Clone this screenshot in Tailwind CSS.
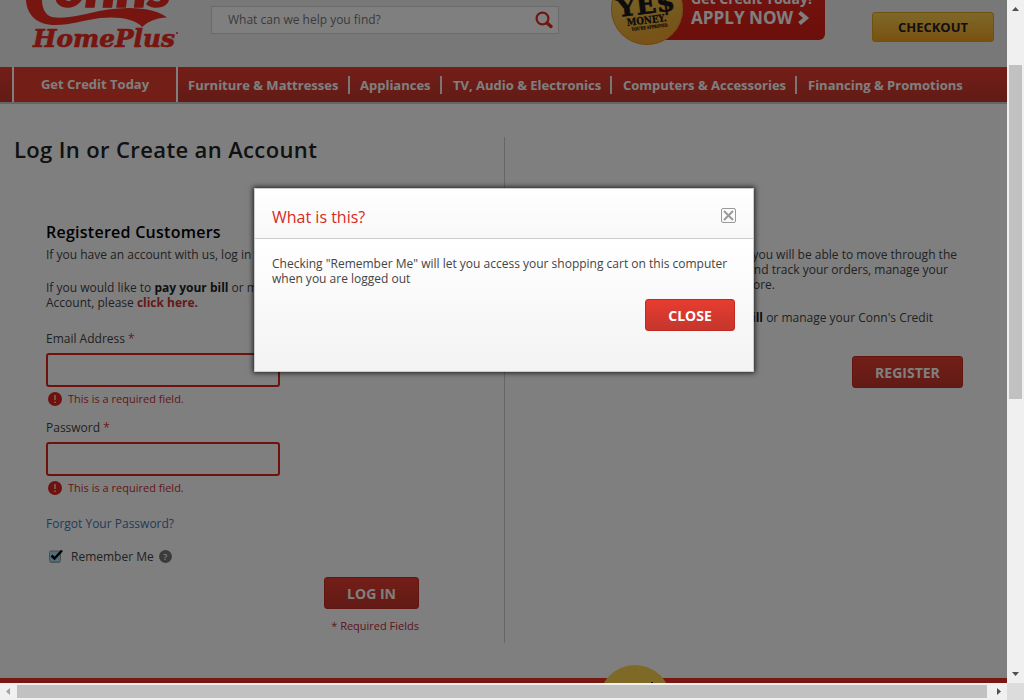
<!DOCTYPE html>
<html lang="en">
<head>
<meta charset="utf-8">
<title>Log In or Create an Account</title>
<script src="https://cdn.jsdelivr.net/npm/@tailwindcss/browser@4"></script>
</head>
<body class="w-[1024px] h-[700px] overflow-hidden bg-[#f0f0f0] font-['Open_Sans',sans-serif] text-[12px] leading-[15px] text-[#444]">
<div class="grid grid-cols-[1007px_17px] grid-rows-[683px_17px]">
  <div class="relative overflow-hidden bg-white">
    <header class="flex h-[67px] bg-[#f0f0f0]">
      <svg class="w-[211px] h-[67px] shrink-0" viewBox="0 0 211 67" fill="#ef2a20">
        <text x="55" y="6.500" font-family="Lato" font-size="50" font-weight="900" font-style="italic" textLength="116" lengthAdjust="spacingAndGlyphs" stroke="#ef2a20" stroke-width="1.500">onns</text>
        <path d="M26 0H42C42 8 45 15 52 17C72 21 96 8 128 8C148 8 160 12 167 17.500C156 18 149 21 142 27C136 19 118 16 100 18C84 20 72 25 55 25C37 25 27 15 26 0Z"/>
        <text x="33" y="46.500" font-family="DejaVu Serif" font-size="25" font-weight="700" font-style="italic" textLength="142" lengthAdjust="spacingAndGlyphs" stroke="#ef2a20" stroke-width=".7">HomePlus</text>
        <circle cx="177" cy="33" r="1"/>
      </svg>
      <div class="mt-[6px] flex h-[28px] w-[348px] shrink-0 items-center justify-between border border-[#d4d4d4] bg-white pl-4 pr-[5px] text-[#777]">
        <span class="pb-[2px]">What can we help you find?</span>
        <svg class="h-[18px] w-[18px]" viewBox="0 0 18 18" fill="none" stroke="#e02a20"><circle cx="7.500" cy="7.500" r="5.900" stroke-width="2.200"/><path d="M12 12l4 3.500" stroke-width="3.400" stroke-linecap="round"/></svg>
      </div>
      <svg class="ml-[51px] h-[67px] w-[216px] shrink-0" viewBox="610 0 216 67">
        <defs>
          <linearGradient id="banner" x2="0" y2="1"><stop stop-color="#e62a20"/><stop offset="1" stop-color="#d81c12"/></linearGradient>
          <linearGradient id="gold" x2=".3" y2="1"><stop offset=".4" stop-color="#edc24d"/><stop offset="1" stop-color="#f0a42e"/></linearGradient>
        </defs>
        <rect x="640" y="-20" width="185" height="60" rx="6" fill="url(#banner)"/>
        <circle cx="647" cy="9" r="36" fill="url(#gold)"/>
        <circle cx="647" cy="9" r="35.500" fill="none" stroke="#dc972b"/>
        <g transform="rotate(-7 647 15)" fill="#191919" stroke="#191919" font-family="DejaVu Serif" font-weight="700">
          <text x="618" y="13.500" font-size="25" textLength="58" lengthAdjust="spacingAndGlyphs" stroke-width=".6">YE$</text>
          <text x="626" y="23.500" font-size="10" textLength="40" lengthAdjust="spacingAndGlyphs" stroke-width=".3">MONEY.</text>
          <text x="630" y="29" font-size="4.500" textLength="37" lengthAdjust="spacingAndGlyphs" stroke-width=".2">YOU'RE APPROVED.</text>
        </g>
        <g fill="#fff" font-family="Open Sans" font-weight="700">
          <text x="691" y="4" font-size="14.500" textLength="121" lengthAdjust="spacingAndGlyphs">Get Credit Today!</text>
          <text x="691" y="24" font-size="17" textLength="102" lengthAdjust="spacingAndGlyphs">APPLY NOW</text>
        </g>
        <path d="M799.500 12.500L806 18L799.500 23.500" fill="none" stroke="#fff" stroke-width="4"/>
      </svg>
      <button class="ml-[46px] mt-[12px] h-[30px] w-[122px] shrink-0 rounded-[3px] border border-[#e0a21c] bg-linear-to-b from-[#fcd052] to-[#f2a41c] text-[13px] font-bold text-[#222]"><svg class="mx-auto h-[16px] w-[72px]"><text x="1" y="12.500" textLength="70" fill="#222">CHECKOUT</text></svg></button>
    </header>
    <nav class="flex h-[37px] border-b-2 border-[#cacaca] bg-linear-to-b from-[#e83c30] to-[#c4362c] text-[13px] font-bold text-white">
      <div class="ml-[12px] w-[166px] shrink-0 border-x-2 border-white bg-[#e83c30] pt-[10px] text-center">Get Credit Today</div>
      <div class="my-[9px] flex h-[18px] items-center whitespace-nowrap [&>span]:h-[18px] [&>span]:pt-[2px]">
        <span class="w-[172px] pl-[10px] border-r-2 border-[#eee]">Furniture &amp; Mattresses</span>
        <span class="w-[92px] pl-[10px] border-r-2 border-[#eee]">Appliances</span>
        <span class="w-[170px] pl-[11px] border-r-2 border-[#eee]">TV, Audio &amp; Electronics</span>
        <span class="w-[185px] pl-[11px] border-r-2 border-[#eee]">Computers &amp; Accessories</span>
        <span class="pl-[11px]">Financing &amp; Promotions</span>
      </div>
    </nav>
    <main class="flex h-[574px] pt-[33px]">
      <section class="h-[506px] w-[505px] shrink-0 border-r border-[#ccc] pl-[14px]">
        <h1 class="text-[22px] font-semibold leading-[24px] tracking-[.37px] text-[#222]">Log In or Create an Account</h1>
        <div class="ml-[32px] pt-[60px]">
          <h2 class="text-[16px] font-semibold leading-[22px] tracking-[.26px] text-black">Registered Customers</h2>
          <p class="mt-[4px] whitespace-nowrap">If you have an account with us, log in using the form</p>
          <p class="mt-[18px] whitespace-nowrap">If you would like to <b class="text-[#222]">pay your bill</b> or manage your<br>Account, please <b class="text-[#c33]">click here.</b></p>
          <p class="mt-[21px]">Email Address <span class="text-[#d33]">*</span></p>
          <div class="mt-[7px] h-[34px] w-[234px] rounded-[3px] border-2 border-[#df241b] bg-white"></div>
          <p class="mt-[4px] flex items-center text-[11px] text-[#c9302a]"><svg class="ml-[2px] mr-[5px] h-[15px] w-[15px]" viewBox="0 0 15 15"><circle cx="7" cy="8" r="7" fill="#df241b"/><path d="M7 4v5M7 10.500v1.500" stroke="#eee" stroke-width="1.300"/></svg>This is a required field.</p>
          <p class="mt-[14px]">Password <span class="text-[#d33]">*</span></p>
          <div class="mt-[7px] h-[34px] w-[234px] rounded-[3px] border-2 border-[#df241b] bg-white"></div>
          <p class="mt-[4px] flex items-center text-[11px] text-[#c9302a]"><svg class="ml-[2px] mr-[5px] h-[15px] w-[15px]" viewBox="0 0 15 15"><circle cx="7" cy="8" r="7" fill="#df241b"/><path d="M7 4v5M7 10.500v1.500" stroke="#eee" stroke-width="1.300"/></svg>This is a required field.</p>
          <p class="mt-[21px] text-[#4178b4]">Forgot Your Password?</p>
          <div class="mt-[18px] flex items-center">
            <svg class="ml-[2px] mr-[7px] h-[15px] w-[16px]" viewBox="0 0 16 15"><rect x="1.500" y="2" width="11" height="11" rx="1.500" fill="#a0e0f8" stroke="#999"/><path d="M2 13.500h10" stroke="#aaa"/><path d="M3.500 6.500L6.500 9.500L14 1.500" fill="none" stroke="#000" stroke-width="2.500"/></svg>
            <span>Remember Me</span>
            <span class="ml-[5px] flex h-[13px] w-[13px] items-center justify-center rounded-full bg-[#777] text-[9px] font-semibold text-white">?</span>
          </div>
          <button class="ml-[278px] mt-[13px] block h-[32px] w-[95px] rounded-[3px] border border-[#c4281f] bg-linear-to-b from-[#e83c30] to-[#c4362c] text-[14px] font-bold text-white">LOG IN</button>
          <p class="mt-[9px] w-[373px] text-right text-[11px] text-[#b82c38]">* Required Fields</p>
        </div>
      </section>
      <section class="w-[458px] pt-[110px] whitespace-nowrap text-right">
        <p class="pr-[6px]">By creating an account with our store, you will be able to move through the</p>
        <p class="pr-[15px]">checkout process faster, view and track your orders, manage your</p>
        <p class="pr-[188px]">account and more.</p>
        <p class="mt-[18px] pr-[30px]">If you would like to <b class="text-[#222]">pay your bill</b> or manage your Conn's Credit</p>
        <button class="mt-[31px] h-[32px] w-[111px] rounded-[3px] border border-[#c4281f] bg-linear-to-b from-[#e83c30] to-[#c4362c] text-[14px] font-bold text-white">REGISTER</button>
      </section>
    </main>
    <footer class="h-[5px] bg-[#f02c24]"></footer>
    <svg class="absolute left-[600px] top-[663px] h-[20px] w-[72px]" viewBox="0 0 72 20"><circle cx="35" cy="38" r="36" fill="#fcd34d"/><path d="M51 19h2v1h-2z" fill="#222"/></svg>

    <div class="absolute inset-0 bg-black/50"></div>

    <div class="absolute left-[254px] top-[188px] flex h-[184px] w-[500px] flex-col border border-[#ccc] bg-white shadow-[0_0_5px_1px_rgba(0,0,0,.75)]">
      <div class="flex h-[50px] items-start justify-between border-b border-[#ccc] bg-linear-to-b from-white to-[#f8f8f8] pl-[17px] pr-[17px]">
        <h3 class="pt-[17px] text-[16px] leading-[22px] text-[#d8291f]">What is this?</h3>
        <svg class="mt-[19px] h-[15px] w-[15px]" viewBox="0 0 15 15" fill="none" stroke="#999"><rect x=".5" y=".5" width="14" height="14" rx="1.500"/><path d="M3 3l9 9M12 3l-9 9" stroke-width="2"/></svg>
      </div>
      <div class="flex-1 bg-linear-to-b from-white to-[#f3f3f3] pl-[17px] pr-[18px] pt-[17px]">
        <p class="whitespace-nowrap">Checking "Remember Me" will let you access your shopping cart on this computer<br>when you are logged out</p>
        <button class="ml-auto mt-[13px] block h-[32px] w-[90px] rounded-[3px] border border-[#c4281f] bg-linear-to-b from-[#e83c30] to-[#c4362c] text-[14px] font-bold text-white">CLOSE</button>
      </div>
    </div>
  </div>

  <div class="flex flex-col items-center justify-between bg-[#f0f0f0]">
    <svg class="h-[65px] w-[17px]" viewBox="0 0 17 65"><path d="M5 11L8.500 7L12 11Z" fill="#505050"/></svg>
    <div class="h-[334px] w-[13px] bg-[#c1c1c1]"></div>
    <svg class="h-[284px] w-[17px]" viewBox="0 0 17 284"><path d="M5 273L8.500 277L12 273Z" fill="#505050"/></svg>
  </div>
  <div class="flex items-center bg-[#f0f0f0]">
    <svg class="h-[17px] w-[17px]" viewBox="0 0 17 17"><path d="M10 5L6 8.500L10 12Z" fill="#a3a3a3"/></svg>
    <div class="h-[13px] w-[970px] bg-[#c1c1c1]"></div>
    <svg class="h-[17px] w-[20px]" viewBox="0 0 20 17"><path d="M10 5L14 8.500L10 12Z" fill="#505050"/></svg>
  </div>
  <div class="bg-[#dcdcdc]"></div>
</div>
</body>
</html>
